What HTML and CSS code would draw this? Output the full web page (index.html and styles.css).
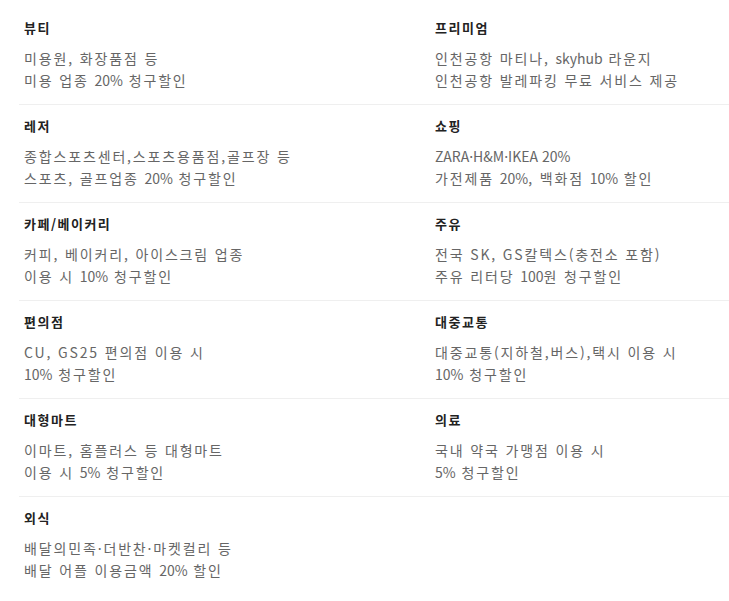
FILE: index.html
```html
<!DOCTYPE html>
<html lang="ko">
<head>
<meta charset="utf-8">
<link rel="stylesheet" href="styles.css">
</head>
<body>
<div class="benefits">
  <div class="row">
    <div class="item"><h3 class="title">뷰티</h3><p class="desc">미용원, 화장품점 등<br>미용 업종 <span class="lat">20%</span> 청구할인</p></div>
    <div class="item right"><h3 class="title">프리미엄</h3><p class="desc">인천공항 마티나, <span class="lat">skyhub</span> 라운지<br>인천공항 발레파킹 무료 서비스 제공</p></div>
  </div>
  <div class="row">
    <div class="item"><h3 class="title">레저</h3><p class="desc">종합스포츠센터,스포츠용품점,골프장 등<br>스포츠, 골프업종 <span class="lat">20%</span> 청구할인</p></div>
    <div class="item right"><h3 class="title">쇼핑</h3><p class="desc"><span class="lat">ZARA·H&amp;M·IKEA 20%</span><br>가전제품 <span class="lat">20%</span>, 백화점 <span class="lat">10%</span> 할인</p></div>
  </div>
  <div class="row">
    <div class="item"><h3 class="title">카페/베이커리</h3><p class="desc">커피, 베이커리, 아이스크림 업종<br>이용 시 <span class="lat">10%</span> 청구할인</p></div>
    <div class="item right"><h3 class="title">주유</h3><p class="desc">전국 SK, GS칼텍스(충전소 포함)<br>주유 리터당 <span class="lat">100</span>원 청구할인</p></div>
  </div>
  <div class="row">
    <div class="item"><h3 class="title">편의점</h3><p class="desc">CU, GS25 편의점 이용 시<br><span class="lat">10%</span> 청구할인</p></div>
    <div class="item right"><h3 class="title">대중교통</h3><p class="desc">대중교통(지하철,버스),택시 이용 시<br><span class="lat">10%</span> 청구할인</p></div>
  </div>
  <div class="row">
    <div class="item"><h3 class="title">대형마트</h3><p class="desc">이마트, 홈플러스 등 대형마트<br>이용 시 <span class="lat">5%</span> 청구할인</p></div>
    <div class="item right"><h3 class="title">의료</h3><p class="desc">국내 약국 가맹점 이용 시<br><span class="lat">5%</span> 청구할인</p></div>
  </div>
  <div class="row">
    <div class="item"><h3 class="title">외식</h3><p class="desc">배달의민족·더반찬·마켓컬리 등<br>배달 어플 이용금액 <span class="lat">20%</span> 할인</p></div>
    <div class="item right"></div>
  </div>
</div>
</body>
</html>
```

FILE: styles.css
```css
html, body {
  margin: 0;
  padding: 0;
  background: #fff;
}
body {
  font-family: "Noto Sans CJK KR", "Noto Sans", sans-serif;
}
.benefits {
  padding-top: 6px;
  margin-left: 19px;
}
.row {
  display: grid;
  grid-template-columns: 411px 1fr;
  border-top: 1px solid #efefef;
}
.row:first-child {
  border-top: none;
}
.item {
  padding: 13px 0 13px 5px;
  height: 72px;
}
.row + .row .item {
  padding-top: 12px;
}
.title {
  margin: 0;
  font-size: 13px;
  line-height: 18px;
  font-weight: bold;
  color: #222;
  letter-spacing: 1.5px;
}
.desc {
  margin: 10px 0 0;
  font-size: 14px;
  line-height: 22px;
  color: #666;
  letter-spacing: 1.85px;
}
.lat {
  letter-spacing: 0;
}
```
